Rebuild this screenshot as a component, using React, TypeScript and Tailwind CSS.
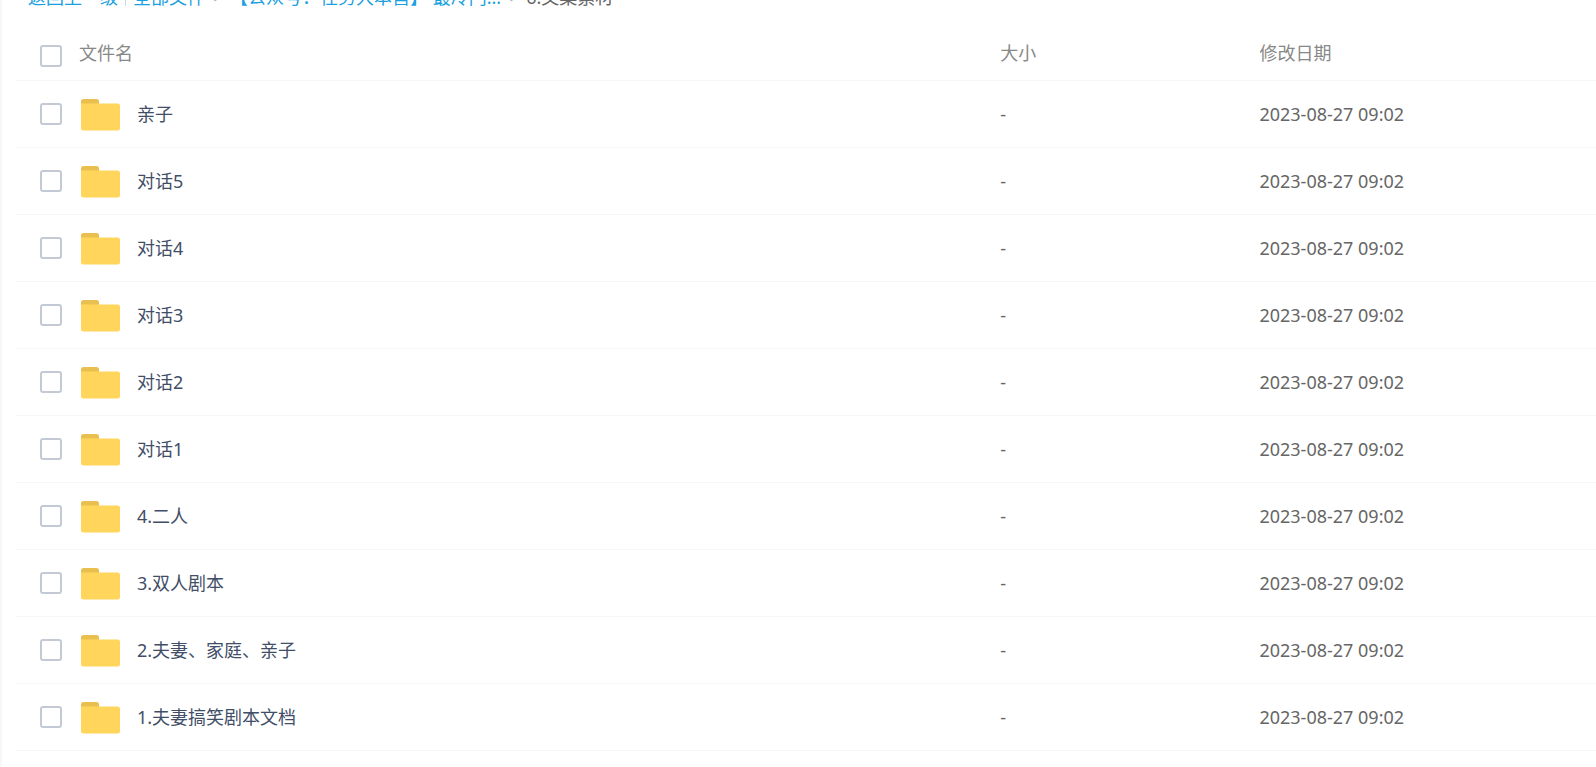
const files = [
  { id: 10, name: "亲子", size: "-", date: "2023-08-27 09:02" },
  { id: 9, name: "对话5", size: "-", date: "2023-08-27 09:02" },
  { id: 8, name: "对话4", size: "-", date: "2023-08-27 09:02" },
  { id: 7, name: "对话3", size: "-", date: "2023-08-27 09:02" },
  { id: 6, name: "对话2", size: "-", date: "2023-08-27 09:02" },
  { id: 5, name: "对话1", size: "-", date: "2023-08-27 09:02" },
  { id: 4, name: "4.二人", size: "-", date: "2023-08-27 09:02" },
  { id: 3, name: "3.双人剧本", size: "-", date: "2023-08-27 09:02" },
  { id: 2, name: "2.夫妻、家庭、亲子", size: "-", date: "2023-08-27 09:02" },
  { id: 1, name: "1.夫妻搞笑剧本文档", size: "-", date: "2023-08-27 09:02" },
];

const FolderIcon = () => (
  <svg width="40" height="34" viewBox="0 0 40 34" aria-hidden="true" className="shrink-0">
    <path d="M0 12V3.500a2.500 2.500 0 0 1 2.500-2.500h13a2.500 2.500 0 0 1 2.500 2.500v3h2v6z" fill="#e9c050" />
    <path d="M0 5.500h36.500a2.500 2.500 0 0 1 2.500 2.500v22a2.500 2.500 0 0 1-2.500 2.500h-34a2.500 2.500 0 0 1-2.500-2.500z" fill="#ffd55b" />
  </svg>
);

const Checkbox = ({ id, label }: { id: string; label: string }) => (
  <input
    id={id}
    type="checkbox"
    aria-label={label}
    className="size-[22px] shrink-0 appearance-none rounded-[3px] border-2 border-[#c3cad5] bg-white checked:bg-[#09aaff]"
  />
);

const Breadcrumb = () => (
  <nav className="-mt-4 flex h-[27px] items-center whitespace-pre pl-[26px] text-[#1a9fe0]">
    <a href="#back">返回上一级</a>
    <span className="mx-[7px] h-4 w-px bg-[#c4dbf0]" />
    <a href="#all">全部文件</a>
    <span className="w-[25px] text-center text-sm text-gray-400">&gt;</span>
    <a href="#parent">【公众号：任务大本营】 最冷门...</a>
    <span className="w-[25px] text-center text-sm text-gray-400">&gt;</span>
    <span className="text-[#666666]">6.文案素材</span>
  </nav>
);

const App = () => {
  return (
    <div className="min-h-screen overflow-hidden border-l-2 border-[#f7f7f9] bg-white font-['Noto_Sans','Noto_Sans_CJK_SC',sans-serif] text-lg leading-[27px]">
      <Breadcrumb />
      <div className="pl-[14px] pt-[14px]">
        <table className="w-full table-fixed border-collapse text-left">
          <thead>
            <tr className="h-[55px] border-b border-[#f5f6f8] text-[#888888]">
              <th className="w-[62.3%] p-0 pt-0.5 font-normal">
                <div className="flex items-end gap-[17px] pl-6">
                  <Checkbox id="all" label="全选" />
                  <label htmlFor="all">文件名</label>
                </div>
              </th>
              <th className="w-[16.4%] p-0 pt-0.5 font-normal">大小</th>
              <th className="p-0 pt-0.5 font-normal">修改日期</th>
            </tr>
          </thead>
          <tbody>
            {files.map((file) => (
              <tr key={file.id} className="h-[67px] border-b border-[#f5f6f8] text-[#666666]">
                <td className="p-0">
                  <div className="flex items-center pl-6">
                    <Checkbox id={`file-${file.id}`} label={file.name} />
                    <label htmlFor={`file-${file.id}`} className="flex items-center gap-4 pl-[19px] pt-0.5 text-[#424e67]">
                      <FolderIcon />
                      {file.name}
                    </label>
                  </div>
                </td>
                <td className="p-0 pt-0.5">{file.size}</td>
                <td className="p-0 pt-0.5">{file.date}</td>
              </tr>
            ))}
          </tbody>
        </table>
      </div>
    </div>
  );
};

export default App;
